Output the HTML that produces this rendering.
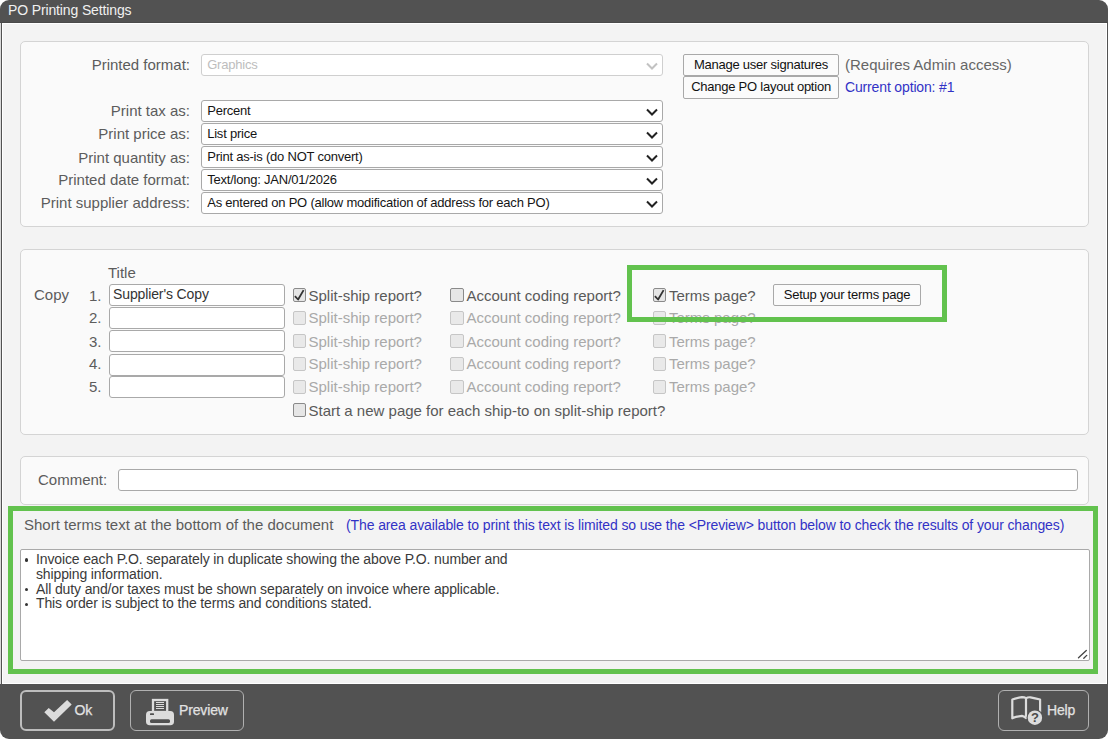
<!DOCTYPE html>
<html><head><meta charset="utf-8">
<style>
*{box-sizing:border-box;margin:0;padding:0}
html,body{width:1108px;height:739px;overflow:hidden;background:#fff;font-family:"Liberation Sans",sans-serif}
.a{position:absolute}
#dlg{position:absolute;left:0;top:0;width:1108px;height:739px;background:#525252;border-radius:9px 9px 9px 9px;overflow:hidden}
#title{left:8px;top:2px;font-size:14px;letter-spacing:-0.13px;color:#f0f0f0;line-height:17px;white-space:nowrap}
#body{left:2px;top:23px;width:1105px;height:661px;background:#f3f3f3;border:1px solid #fff}
.panel{position:absolute;background:#fafafa;border:1px solid #d4d4d4;border-radius:5px}
.lbl{position:absolute;font-size:15px;color:#5c5c5c;line-height:17px;white-space:nowrap}
.rlbl{text-align:right}
.sel{position:absolute;height:22px;width:462px;background:#fff;border:1px solid #a9a9a9;border-radius:3px;font-size:13px;letter-spacing:-0.22px;color:#151515;line-height:20px;padding-left:5.2px;white-space:nowrap}
.sel.dis{border-color:#cfcfcf;color:#bdbdbd}
.chev{position:absolute;right:4px;top:7px;width:12px;height:8px}
.btn{position:absolute;height:22px;background:#fbfbfb;border:1px solid #a9a9a9;border-radius:2px;font-size:13px;letter-spacing:-0.24px;color:#111;line-height:20px;text-align:center;white-space:nowrap}
.inp{position:absolute;height:22px;width:176px;background:#fff;border:1px solid #a9a9a9;border-radius:3px;font-size:14px;letter-spacing:-0.12px;color:#333;line-height:18px;padding-left:3px;white-space:nowrap}
.cb{position:absolute;width:13px;height:14px;border:1px solid #8a8a8a;border-radius:2px;background:#e6e6e6}
.cb.dis{border-color:#c6c6c6;background:#e9e9e9}
.cbl{position:absolute;font-size:15px;color:#595959;line-height:17px;white-space:nowrap}
.cbl.dis{color:#a9a9a9}
.green{position:absolute;border:5px solid #62c24e}
.fbtn{position:absolute;top:690px;height:41px;border:1px solid #b0b0b0;border-radius:6px}
.ta{position:absolute;font-size:14px;letter-spacing:-0.13px;color:#3a3a3a;line-height:16px;white-space:nowrap}
.dot{position:absolute;left:24.6px;width:3.4px;height:3.4px;border-radius:50%;background:#333}
.ftxt{position:absolute;font-size:14px;letter-spacing:-0.15px;color:#e2e2e2;-webkit-text-stroke:0.25px #e2e2e2;line-height:16px;white-space:nowrap}
</style></head><body>
<div id="dlg">
  <div class="a" id="title">PO Printing Settings</div>
</div>
<div class="a" style="left:0;top:23px;width:1px;height:661px;background:#d9d9d9"></div>
<div class="a" style="left:0;top:22px;width:1108px;height:1px;background:#4a4a4a"></div>
<div class="a" id="body"></div>

<!-- Panel 1 -->
<div class="panel" style="left:20px;top:41px;width:1069px;height:186px"></div>
<div class="lbl rlbl" style="left:0;width:190px;top:56px">Printed format:</div>
<div class="sel dis" style="left:201px;top:54px">Graphics<svg class="chev" viewBox="0 0 12 8"><path d="M1 1.5 L6 6.5 L11 1.5" fill="none" stroke="#c2c2c2" stroke-width="2"/></svg></div>
<div class="lbl rlbl" style="left:0;width:190px;top:102px">Print tax as:</div>
<div class="sel" style="left:201px;top:100px">Percent<svg class="chev" viewBox="0 0 12 8"><path d="M1 1.5 L6 6.5 L11 1.5" fill="none" stroke="#222" stroke-width="2"/></svg></div>
<div class="lbl rlbl" style="left:0;width:190px;top:125px">Print price as:</div>
<div class="sel" style="left:201px;top:123px">List price<svg class="chev" viewBox="0 0 12 8"><path d="M1 1.5 L6 6.5 L11 1.5" fill="none" stroke="#222" stroke-width="2"/></svg></div>
<div class="lbl rlbl" style="left:0;width:190px;top:148.7px">Print quantity as:</div>
<div class="sel" style="left:201px;top:146px">Print as-is (do NOT convert)<svg class="chev" viewBox="0 0 12 8"><path d="M1 1.5 L6 6.5 L11 1.5" fill="none" stroke="#222" stroke-width="2"/></svg></div>
<div class="lbl rlbl" style="left:0;width:190px;top:171px">Printed date format:</div>
<div class="sel" style="left:201px;top:169px">Text/long: JAN/01/2026<svg class="chev" viewBox="0 0 12 8"><path d="M1 1.5 L6 6.5 L11 1.5" fill="none" stroke="#222" stroke-width="2"/></svg></div>
<div class="lbl rlbl" style="left:0;width:190px;top:194px">Print supplier address:</div>
<div class="sel" style="left:201px;top:192px">As entered on PO (allow modification of address for each PO)<svg class="chev" viewBox="0 0 12 8"><path d="M1 1.5 L6 6.5 L11 1.5" fill="none" stroke="#222" stroke-width="2"/></svg></div>

<div class="btn" style="left:683px;top:54px;width:156px">Manage user signatures</div>
<div class="btn" style="left:683px;top:76px;width:156px;height:23px">Change PO layout option</div>
<div class="lbl" style="left:845px;top:56px;color:#666">(Requires Admin access)</div>
<div class="lbl" style="left:845px;top:79px;font-size:14px;letter-spacing:-0.15px;color:#3232c6">Current option: #1</div>

<!-- Panel 2 -->
<div class="panel" style="left:20px;top:249px;width:1069px;height:186px"></div>
<div class="lbl" style="left:108px;top:264px">Title</div>
<div class="lbl" style="left:34px;top:286px">Copy</div>
<div class="lbl rlbl" style="left:59.5px;width:42px;top:287px">1.</div>
<div class="inp" style="left:109px;top:284px">Supplier's Copy</div>
<div class="cb" style="left:293px;top:288px"><svg class="a" style="left:-1px;top:-1px" width="13" height="14" viewBox="0 0 13 14"><path d="M1.9 8.1 L5.1 11.5 L10.6 2.1" fill="none" stroke="#333" stroke-width="1.8" stroke-linejoin="round"/></svg></div>
<div class="cbl" style="left:308.5px;top:287px">Split-ship report?</div>
<div class="cb" style="width:14px;left:450px;top:288px"></div>
<div class="cbl" style="left:466.5px;top:287px">Account coding report?</div>
<div class="cb" style="left:653px;top:288px"><svg class="a" style="left:-1px;top:-1px" width="13" height="14" viewBox="0 0 13 14"><path d="M1.9 8.1 L5.1 11.5 L10.6 2.1" fill="none" stroke="#333" stroke-width="1.8" stroke-linejoin="round"/></svg></div>
<div class="cbl" style="left:669px;top:287px">Terms page?</div>
<div class="lbl rlbl" style="left:59.5px;width:42px;top:309px">2.</div>
<div class="inp" style="left:109px;top:307px"></div>
<div class="cb dis" style="left:293px;top:311px"></div>
<div class="cbl dis" style="left:308.5px;top:309px">Split-ship report?</div>
<div class="cb dis" style="width:14px;left:450px;top:311px"></div>
<div class="cbl dis" style="left:466.5px;top:309px">Account coding report?</div>
<div class="cb dis" style="left:653px;top:311px"></div>
<div class="cbl dis" style="left:669px;top:309px">Terms page?</div>
<div class="lbl rlbl" style="left:59.5px;width:42px;top:333px">3.</div>
<div class="inp" style="left:109px;top:330px"></div>
<div class="cb dis" style="left:293px;top:334px"></div>
<div class="cbl dis" style="left:308.5px;top:333px">Split-ship report?</div>
<div class="cb dis" style="width:14px;left:450px;top:334px"></div>
<div class="cbl dis" style="left:466.5px;top:333px">Account coding report?</div>
<div class="cb dis" style="left:653px;top:334px"></div>
<div class="cbl dis" style="left:669px;top:333px">Terms page?</div>
<div class="lbl rlbl" style="left:59.5px;width:42px;top:355px">4.</div>
<div class="inp" style="left:109px;top:354px"></div>
<div class="cb dis" style="left:293px;top:357px"></div>
<div class="cbl dis" style="left:308.5px;top:355px">Split-ship report?</div>
<div class="cb dis" style="width:14px;left:450px;top:357px"></div>
<div class="cbl dis" style="left:466.5px;top:355px">Account coding report?</div>
<div class="cb dis" style="left:653px;top:357px"></div>
<div class="cbl dis" style="left:669px;top:355px">Terms page?</div>
<div class="lbl rlbl" style="left:59.5px;width:42px;top:378px">5.</div>
<div class="inp" style="left:109px;top:376px"></div>
<div class="cb dis" style="left:293px;top:380px"></div>
<div class="cbl dis" style="left:308.5px;top:378px">Split-ship report?</div>
<div class="cb dis" style="width:14px;left:450px;top:380px"></div>
<div class="cbl dis" style="left:466.5px;top:378px">Account coding report?</div>
<div class="cb dis" style="left:653px;top:380px"></div>
<div class="cbl dis" style="left:669px;top:378px">Terms page?</div>
<div class="cb" style="left:293px;top:403px"></div>
<div class="cbl" style="left:308.5px;top:402px">Start a new page for each ship-to on split-ship report?</div>
<div class="btn" style="left:773px;top:284px;width:148px">Setup your terms page</div>

<!-- Panel 3 -->
<div class="panel" style="left:20px;top:456px;width:1069px;height:49px"></div>
<div class="lbl" style="left:38px;top:471px">Comment:</div>
<div class="inp" style="left:118px;top:469px;width:960px"></div>

<!-- Terms -->
<div class="lbl" style="left:24px;top:516px">Short terms text at the bottom of the document</div>
<div class="lbl" style="left:346px;top:517px;font-size:14px;letter-spacing:-0.11px;color:#3232c6">(The area available to print this text is limited so use the &lt;Preview&gt; button below to check the results of your changes)</div>
<div class="a" style="left:20px;top:549px;width:1070px;height:112px;background:#fff;border:1px solid #a9a9a9;border-radius:2px"></div>

<div class="dot" style="top:558.2px"></div><div class="ta" style="left:36px;top:551px">Invoice each P.O. separately in duplicate showing the above P.O. number and</div>
<div class="ta" style="left:36px;top:566px">shipping information.</div>
<div class="dot" style="top:587.8px"></div><div class="ta" style="left:36px;top:581px">All duty and/or taxes must be shown separately on invoice where applicable.</div>
<div class="dot" style="top:603px"></div><div class="ta" style="left:36px;top:595.4px">This order is subject to the terms and conditions stated.</div>
<svg class="a" style="left:1076px;top:647px" width="12" height="12" viewBox="0 0 12 12"><path d="M2.5 10.8 L10.3 3.5 M7.8 11.3 L10.7 8.4" stroke="#444" stroke-width="1.3" stroke-linecap="round" fill="none"/></svg>
<div class="green" style="left:8px;top:506px;width:1090px;height:168px"></div>
<div class="green" style="left:627px;top:265px;width:320px;height:57px"></div>

<!-- Footer -->
<div class="fbtn" style="left:20px;width:95px;border:2px solid #bdbdbd"></div>
<div class="ftxt" style="left:74.5px;top:702px">Ok</div>
<div class="fbtn" style="left:130px;width:114px"></div>
<div class="ftxt" style="left:179px;top:702px">Preview</div>
<div class="fbtn" style="left:998px;width:91px"></div>
<div class="ftxt" style="left:1047px;top:702px">Help</div>
<svg class="a" style="left:0;top:0" width="1108" height="739" viewBox="0 0 1108 739">
<polygon points="44.3,712.3 48.7,708 54,712.2 67.1,700 71.7,704.5 54,721.8" fill="#dcdcdc"/>
<rect x="153" y="700" width="14.2" height="12" fill="none" stroke="#dcdcdc" stroke-width="2.3"/>
<path d="M156 702.5h8M156 704.5h8M156 706.5h8M156 708.5h8" stroke="#dcdcdc" stroke-width="1"/>
<rect x="146" y="711" width="28" height="14.2" rx="3.8" fill="#dcdcdc"/>
<rect x="150" y="713.2" width="4" height="1.8" rx="0.6" fill="#505050"/>
<rect x="150" y="719.2" width="20" height="3.7" rx="1.5" fill="#505050"/>
<path d="M1012.3 718.3 V699.5 Q1017 698 1022 697.2 Q1024.5 697.2 1026 698.2 V718.2 Q1024.5 716.2 1022 715.8 Q1017 716.3 1012.3 718.3 Z M1026 698.2 Q1028 697 1030.5 697.3 Q1035 698 1040.1 699.5 V712" fill="none" stroke="#dcdcdc" stroke-width="2.2" stroke-linejoin="round"/>
<circle cx="1034.9" cy="717.7" r="8.4" fill="#525252"/>
<circle cx="1034.9" cy="717.7" r="7.2" fill="#dcdcdc"/>
<text x="1034.9" y="722.2" font-family="Liberation Sans" font-size="13" font-weight="bold" text-anchor="middle" fill="#4a4a4a">?</text>
</svg>
</body></html>
